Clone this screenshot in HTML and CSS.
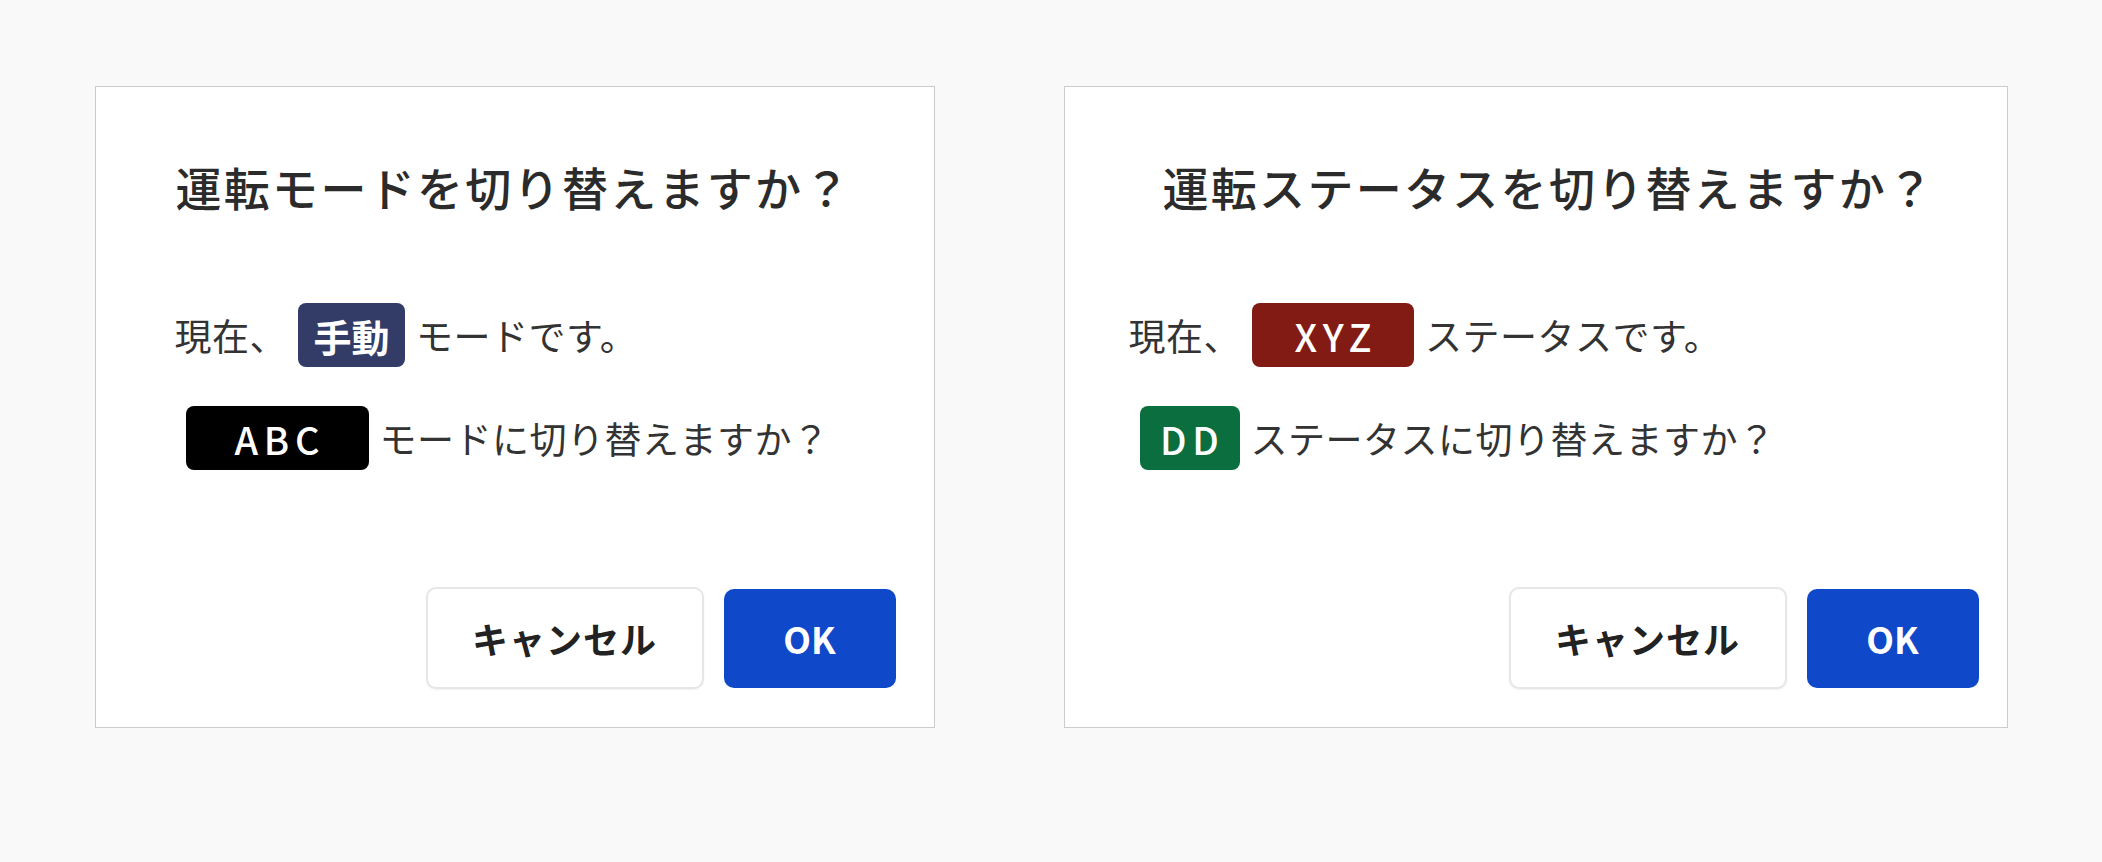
FILE: index.html
```html
<!DOCTYPE html>
<html lang="ja">
<head>
    <meta charset="UTF-8">
    <meta name="viewport" content="width=device-width, initial-scale=1.0">
    <title>切り替え確認</title>
    <link rel="stylesheet" href="styles.css">
</head>
<body>
    <div class="stage">
        <!-- 運転モード -->
        <div class="dialog dialog-mode">
            <h2 class="dialog-title">運転モードを切り替えますか？</h2>
            <div class="dialog-body">
                <p class="line"><span>現在、</span><span class="badge badge-navy badge-manual">手動</span><span>モードです。</span></p>
                <p class="line line-next"><span class="badge badge-black badge-abc">ABC</span><span>モードに切り替えますか？</span></p>
            </div>
            <div class="dialog-actions">
                <button class="btn btn-cancel">キャンセル</button>
                <button class="btn btn-ok">OK</button>
            </div>
        </div>

        <!-- 運転ステータス -->
        <div class="dialog dialog-status">
            <h2 class="dialog-title">運転ステータスを切り替えますか？</h2>
            <div class="dialog-body">
                <p class="line"><span>現在、</span><span class="badge badge-red badge-xyz">XYZ</span><span>ステータスです。</span></p>
                <p class="line line-next"><span class="badge badge-green badge-dd">DD</span><span>ステータスに切り替えますか？</span></p>
            </div>
            <div class="dialog-actions">
                <button class="btn btn-cancel">キャンセル</button>
                <button class="btn btn-ok">OK</button>
            </div>
        </div>
    </div>
</body>
</html>
```

FILE: styles.css
```css
body {
    margin: 0;
    background-color: #f9f9f9;
    color: #333;
    font-family: "Noto Sans CJK JP", "Noto Sans", sans-serif;
}
.stage {
    display: flex;
    justify-content: center;
    align-items: flex-start;
    gap: 129px;
    padding-top: 86px;
}
.dialog {
    box-sizing: border-box;
    height: 642px;
    background: #fff;
    border: 1px solid #cccccc;
    display: flex;
    flex-direction: column;
}
.dialog-mode {
    width: 840px;
}
.dialog-status {
    width: 944px;
}
.dialog-title {
    margin: 64px 0 0;
    font-size: 46px;
    font-weight: 500;
    line-height: 70px;
    letter-spacing: 2.3px;
    color: #2b2b2b;
    white-space: nowrap;
}
.dialog-mode .dialog-title {
    padding-left: 80px;
}
.dialog-status .dialog-title {
    padding-left: 98px;
}
.dialog-body {
    margin-top: 82px;
}
.dialog-mode .dialog-body {
    padding-left: 79px;
}
.dialog-status .dialog-body {
    padding-left: 64px;
}
.line {
    display: flex;
    align-items: center;
    height: 64px;
    margin: 0;
    font-size: 37px;
    letter-spacing: 0.5px;
    white-space: nowrap;
}
.line-next {
    margin-top: 39px;
}
.badge {
    box-sizing: border-box;
    display: inline-flex;
    align-items: center;
    justify-content: center;
    height: 64px;
    margin: 0 11px;
    border-radius: 8px;
    color: #fff;
    font-size: 38px;
    font-weight: 500;
    letter-spacing: 0.15em;
    text-indent: 0.15em;
}
.badge-navy {
    background: #323c66;
    font-weight: 700;
    letter-spacing: 0;
    text-indent: 0;
}
.badge-black {
    background: #000;
}
.badge-red {
    background: #821b14;
}
.badge-green {
    background: #0b6e3f;
}
.badge-manual { width: 107px; }
.badge-abc { width: 183px; }
.badge-xyz { width: 162px; }
.badge-dd { width: 100px; }
.dialog-actions {
    margin-top: auto;
    display: flex;
    justify-content: flex-end;
    align-items: center;
    gap: 20px;
    padding-bottom: 38px;
}
.dialog-mode .dialog-actions {
    padding-right: 38px;
}
.dialog-status .dialog-actions {
    padding-right: 28px;
}
.btn {
    box-sizing: border-box;
    border-radius: 10px;
    font-family: "Noto Sans CJK JP", "Noto Sans", sans-serif;
    font-size: 36px;
    font-weight: 700;
    cursor: pointer;
}
.btn-cancel {
    width: 278px;
    height: 102px;
    background: #fff;
    color: #222;
    border: 2px solid #e6e6e6;
    box-shadow: 0 1px 2px rgba(0, 0, 0, 0.06);
    letter-spacing: 1px;
}
.btn-ok {
    width: 172px;
    height: 99px;
    background: #0f48c8;
    color: #fff;
    border: none;
}
```
